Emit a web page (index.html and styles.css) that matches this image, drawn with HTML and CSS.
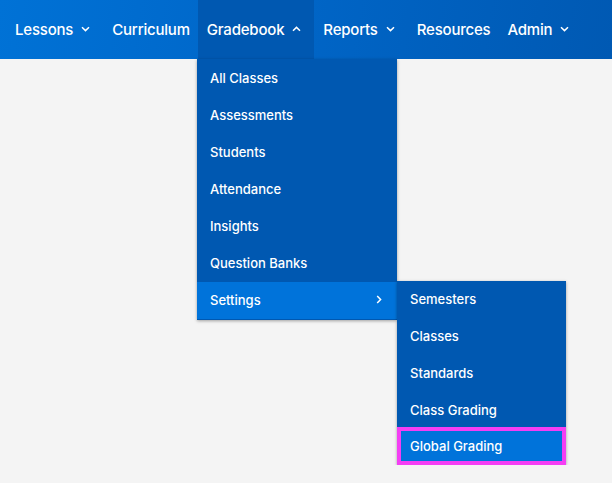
FILE: index.html
```html
<!DOCTYPE html>
<html>
<head>
  <meta charset="UTF-8">
  <title>Gradebook</title>
  <link rel="stylesheet" href="styles.css">
</head>
<body>
  <nav class="topnav">
    <div class="nav-item">Lessons
      <svg class="chev" width="9" height="6" viewBox="0 0 9 6"><path d="M1 1.2 L4.5 4.6 L8 1.2" /></svg>
    </div>
    <div class="nav-item plain">Curriculum</div>
    <div class="nav-item open">Gradebook
      <svg class="chev" width="9" height="6" viewBox="0 0 9 6"><path d="M1 4.8 L4.5 1.4 L8 4.8" /></svg>
    </div>
    <div class="nav-item">Reports
      <svg class="chev" width="9" height="6" viewBox="0 0 9 6"><path d="M1 1.2 L4.5 4.6 L8 1.2" /></svg>
    </div>
    <div class="nav-item plain">Resources</div>
    <div class="nav-item">Admin
      <svg class="chev" width="9" height="6" viewBox="0 0 9 6"><path d="M1 1.2 L4.5 4.6 L8 1.2" /></svg>
    </div>
  </nav>

  <div class="menus">
    <div class="dropdown">
      <div class="menu-item">All Classes</div>
      <div class="menu-item">Assessments</div>
      <div class="menu-item">Students</div>
      <div class="menu-item">Attendance</div>
      <div class="menu-item">Insights</div>
      <div class="menu-item">Question Banks</div>
      <div class="menu-item hover">Settings
        <svg class="chev-right" width="6" height="9" viewBox="0 0 6 9"><path d="M1.2 1 L4.6 4.5 L1.2 8" /></svg>
      </div>
    </div>
    <div class="dropdown submenu">
      <div class="menu-item">Semesters</div>
      <div class="menu-item">Classes</div>
      <div class="menu-item">Standards</div>
      <div class="menu-item">Class Grading</div>
      <div class="menu-item hover selected">Global Grading</div>
    </div>
  </div>
</body>
</html>
```

FILE: styles.css
```css
body {
  margin: 0;
  background: #f4f4f4;
  font-family: "Inter", "Liberation Sans", sans-serif;
  color: white;
}

.topnav {
  display: flex;
  height: 59px;
  padding-left: 6px;
  background: linear-gradient(100deg, #0072d6 0%, #0066c8 45%, #0059b3 100%);
}

.nav-item {
  display: flex;
  align-items: center;
  padding: 0 13px 1px 9px;
  font-size: 15px;
  font-weight: 500;
  letter-spacing: -0.2px;
}

.nav-item.plain {
  padding-right: 8px;
}

.nav-item.open {
  background: #0058b1;
}

.chev {
  margin-left: 8px;
  fill: none;
  stroke: white;
  stroke-width: 1.5;
}

.menus {
  display: flex;
  align-items: flex-start;
  margin-left: 197px;
}

.dropdown {
  width: 200px;
  padding: 1px 0;
  background: #0058b1;
  box-shadow: 0 1px 3px rgba(0,0,0,0.35);
}

.menu-item {
  display: flex;
  align-items: center;
  height: 37px;
  padding: 0 13px 2px;
  box-sizing: border-box;
  font-size: 13px;
  font-weight: 500;
}

.menu-item.hover {
  background: #0073da;
}

.chev-right {
  margin-left: auto;
  margin-right: 2px;
  fill: none;
  stroke: white;
  stroke-width: 1.5;
}

.submenu {
  width: 169px;
  margin-top: 222px;
  padding: 0;
}

.menu-item.selected {
  margin-top: -2px;
  height: 38px;
  padding-bottom: 0;
  box-shadow: inset 0 0 0 4px #f43ef4;
}
```
